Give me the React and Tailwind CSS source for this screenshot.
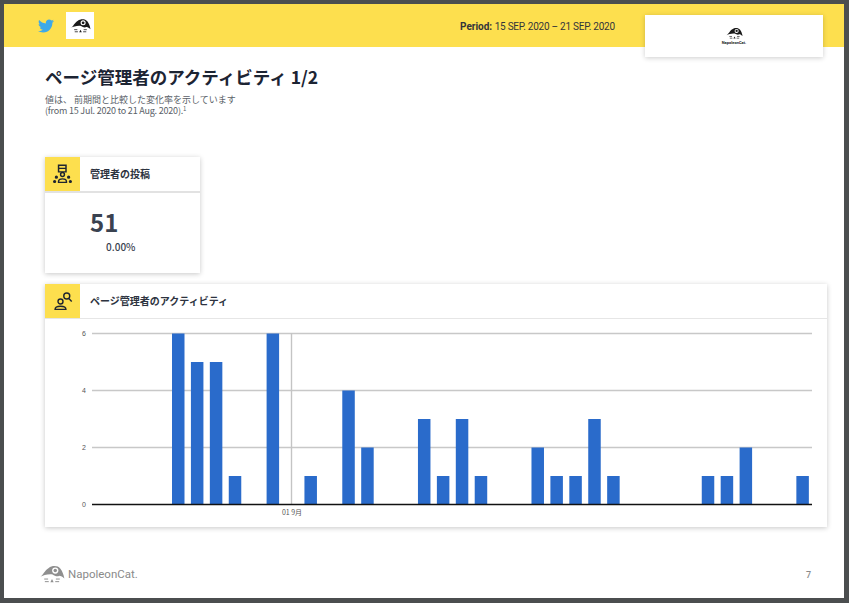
import { FaTwitter } from "react-icons/fa";

const JP = "font-['Noto_Sans_CJK_JP','Noto_Sans',sans-serif]";

const bars = [
	[0, 6], [1, 5], [2, 5], [3, 1], [5, 6], [7, 1], [9, 4], [10, 2],
	[13, 3], [14, 1], [15, 3], [16, 1], [19, 2], [20, 1], [21, 1], [22, 3], [23, 1],
	[28, 1], [29, 1], [30, 2], [33, 1],
];

// NapoleonCat head, used in three sizes
const CatLogo = ({ className, color = "#1a1a1a" }) => (
	<svg viewBox="0 0 40 30" className={className}>
		<path d="M1 19 C6 17 9 8 15 5 C20 1 29 1 33 6 C36 10 38 15 39 21 C35 18 33 17 31 17 C28 19 24 17 21 15 C14 14 7 16 1 19 Z" fill={color} />
		<circle cx="25" cy="9" r="4.8" fill="#fff" />
		<circle cx="25" cy="9" r="2.7" fill={color} />
		<path d="M8 22 H14 M9 26 H15 M26 22 H32 M25 26 H31" stroke={color} strokeWidth="1.5" />
		<path d="M20 22 L22.5 27 H17.5 Z" fill={color} />
	</svg>
);

const CardHeader = ({ icon, title }) => (
	<div className="flex h-[34px] items-stretch">
		<div className="flex w-[35px] items-center justify-center bg-[#fddf4e]">{icon}</div>
		<div className={`${JP} flex items-center pb-[2px] pl-[10px] text-[10px] font-bold text-[#2d3340]`}>{title}</div>
	</div>
);

const PostsIcon = () => (
	<svg viewBox="0 0 24 24" className="h-[21px] w-[21px]" fill="none" stroke="#1f2530" strokeWidth="1.7">
		<path d="M7.5 1.5 H16 V9 H7.5 Z M7.5 5 H16" />
		<circle cx="12" cy="12" r="2.2" />
		<path d="M7.5 20 C7.5 16 16.5 16 16.5 20 V21 H7.5 Z" />
		<circle cx="3" cy="20" r="1" fill="#1f2530" />
		<circle cx="21" cy="20" r="1" fill="#1f2530" />
		<circle cx="5" cy="15" r="1" fill="#1f2530" />
		<circle cx="19" cy="15" r="1" fill="#1f2530" />
	</svg>
);

const SearchUserIcon = () => (
	<svg viewBox="0 0 24 24" className="h-[20px] w-[20px]" fill="none" stroke="#1f2530" strokeWidth="1.7">
		<circle cx="9" cy="12.5" r="3" />
		<path d="M2.5 22 C2.5 17 15.5 17 15.5 22 Z" />
		<circle cx="16.5" cy="6" r="3.6" />
		<path d="M19 9 L22.5 12.5" />
	</svg>
);

const Chart = () => {
	const y = (v) => 186.5 - v * 28.5;
	return (
		<svg width="782" height="209" className="block">
			<line x1="0" x2="782" y1="0.5" y2="0.5" stroke="#e6e6e6" strokeWidth="1" />
			{[6, 4, 2].map((v) => (
				<line key={v} x1="47" x2="767" y1={y(v)} y2={y(v)} stroke="#c8c8c8" strokeWidth="1.4" />
			))}
			<line x1="246.5" x2="246.5" y1="15" y2="186" stroke="#c4c4c4" strokeWidth="1.4" />
			{bars.map(([i, v]) => (
				<rect key={i} x={127 + i * 18.92} y={y(v)} width="12.5" height={v * 28.5} fill="#2a6bcb" />
			))}
			<line x1="47" x2="767" y1="186.5" y2="186.5" stroke="#111" strokeWidth="1.5" />
			{[6, 4, 2, 0].map((v) => (
				<text key={v} x="41" y={y(v) + 2.5} textAnchor="end" fontSize="7" fill="#555" fontFamily="Liberation Sans">{v}</text>
			))}
			<text x="247" y="197" textAnchor="middle" fontSize="7" fill="#555" fontFamily="Noto Sans CJK JP">01 9月</text>
		</svg>
	);
};

export default function App() {
	return (
		<div className="h-[603px] w-[849px] overflow-hidden bg-[#4b4e4f] pb-[5px] pl-[4px] pr-[5px] pt-[4px]">
			<div className="relative flex h-full flex-col bg-white">
				<header className="flex h-[43px] shrink-0 items-center bg-[#fddf4e] pl-[34px]">
					<FaTwitter className="h-[16px] w-[16px] text-[#3fa9e8]" />
					<div className="ml-[12px] flex h-[27px] w-[28px] items-center justify-center bg-white">
						<CatLogo className="h-[16px] w-[21px]" />
					</div>
					<p className="ml-[366px] mt-[2px] font-['Roboto',sans-serif] text-[10px] text-[#33343a]">
						<b>Period:</b> <span className="tracking-[-0.25px]">15 SEP. 2020 – 21 SEP. 2020</span>
					</p>
				</header>

				<div className="absolute left-[641px] top-[11px] flex h-[42px] w-[178px] flex-col items-center justify-center bg-white shadow-[0_1px_5px_rgba(0,0,0,0.2)]">
					<CatLogo className="h-[13px] w-[17px]" />
					<span className="font-['Roboto',sans-serif] text-[4px] font-bold leading-[5px] text-[#222]">NapoleonCat.</span>
				</div>

				<main className="flex flex-1 flex-col pl-[41px]">
					<h1 className={`${JP} mt-[17px] text-[17.5px] font-bold leading-[26px] text-[#1c2433]`}>ページ管理者のアクティビティ 1/2</h1>
					<p className={`${JP} mt-[5px] text-[9px] leading-[10.5px] text-[#5a5f68]`}>
						<span className="block">値は、 前期間と比較した変化率を示しています</span>
						<span className="block tracking-[-0.2px]">
							(from 15 Jul. 2020 to 21 Aug. 2020).<sup className="text-[6px] leading-[0]">1</sup>
						</span>
					</p>

					<section className="mt-[41px] h-[116px] w-[155px] bg-white shadow-[0_1px_5px_rgba(0,0,0,0.22)]">
						<CardHeader icon={<PostsIcon />} title="管理者の投稿" />
						<div className="border-t-2 border-[#e2e2e2] pl-[45px] pt-[13px]">
							<div className={`${JP} text-[24px] font-bold leading-[32px] text-[#3a4250]`}>51</div>
							<div className={`${JP} ml-[16px] mt-[2px] text-[10px] font-medium leading-[14px] text-[#3a4250]`}>0.00%</div>
						</div>
					</section>

					<section className="mt-[11px] h-[243px] w-[782px] bg-white shadow-[0_1px_5px_rgba(0,0,0,0.22)]">
						<CardHeader icon={<SearchUserIcon />} title="ページ管理者のアクティビティ" />
						<Chart />
					</section>

					<footer className="mt-[36px] flex items-center pr-[33px]">
						<CatLogo className="-ml-[6px] h-[23px] w-[26px]" color="#8f8f8f" />
						<span className="ml-[3px] font-['Roboto',sans-serif] text-[11.5px] text-[#8a8a8a]">NapoleonCat.</span>
						<span className="ml-auto mt-[3px] font-['Roboto',sans-serif] text-[9px] font-medium text-[#8a8a8a]">7</span>
					</footer>
				</main>
			</div>
		</div>
	);
}
